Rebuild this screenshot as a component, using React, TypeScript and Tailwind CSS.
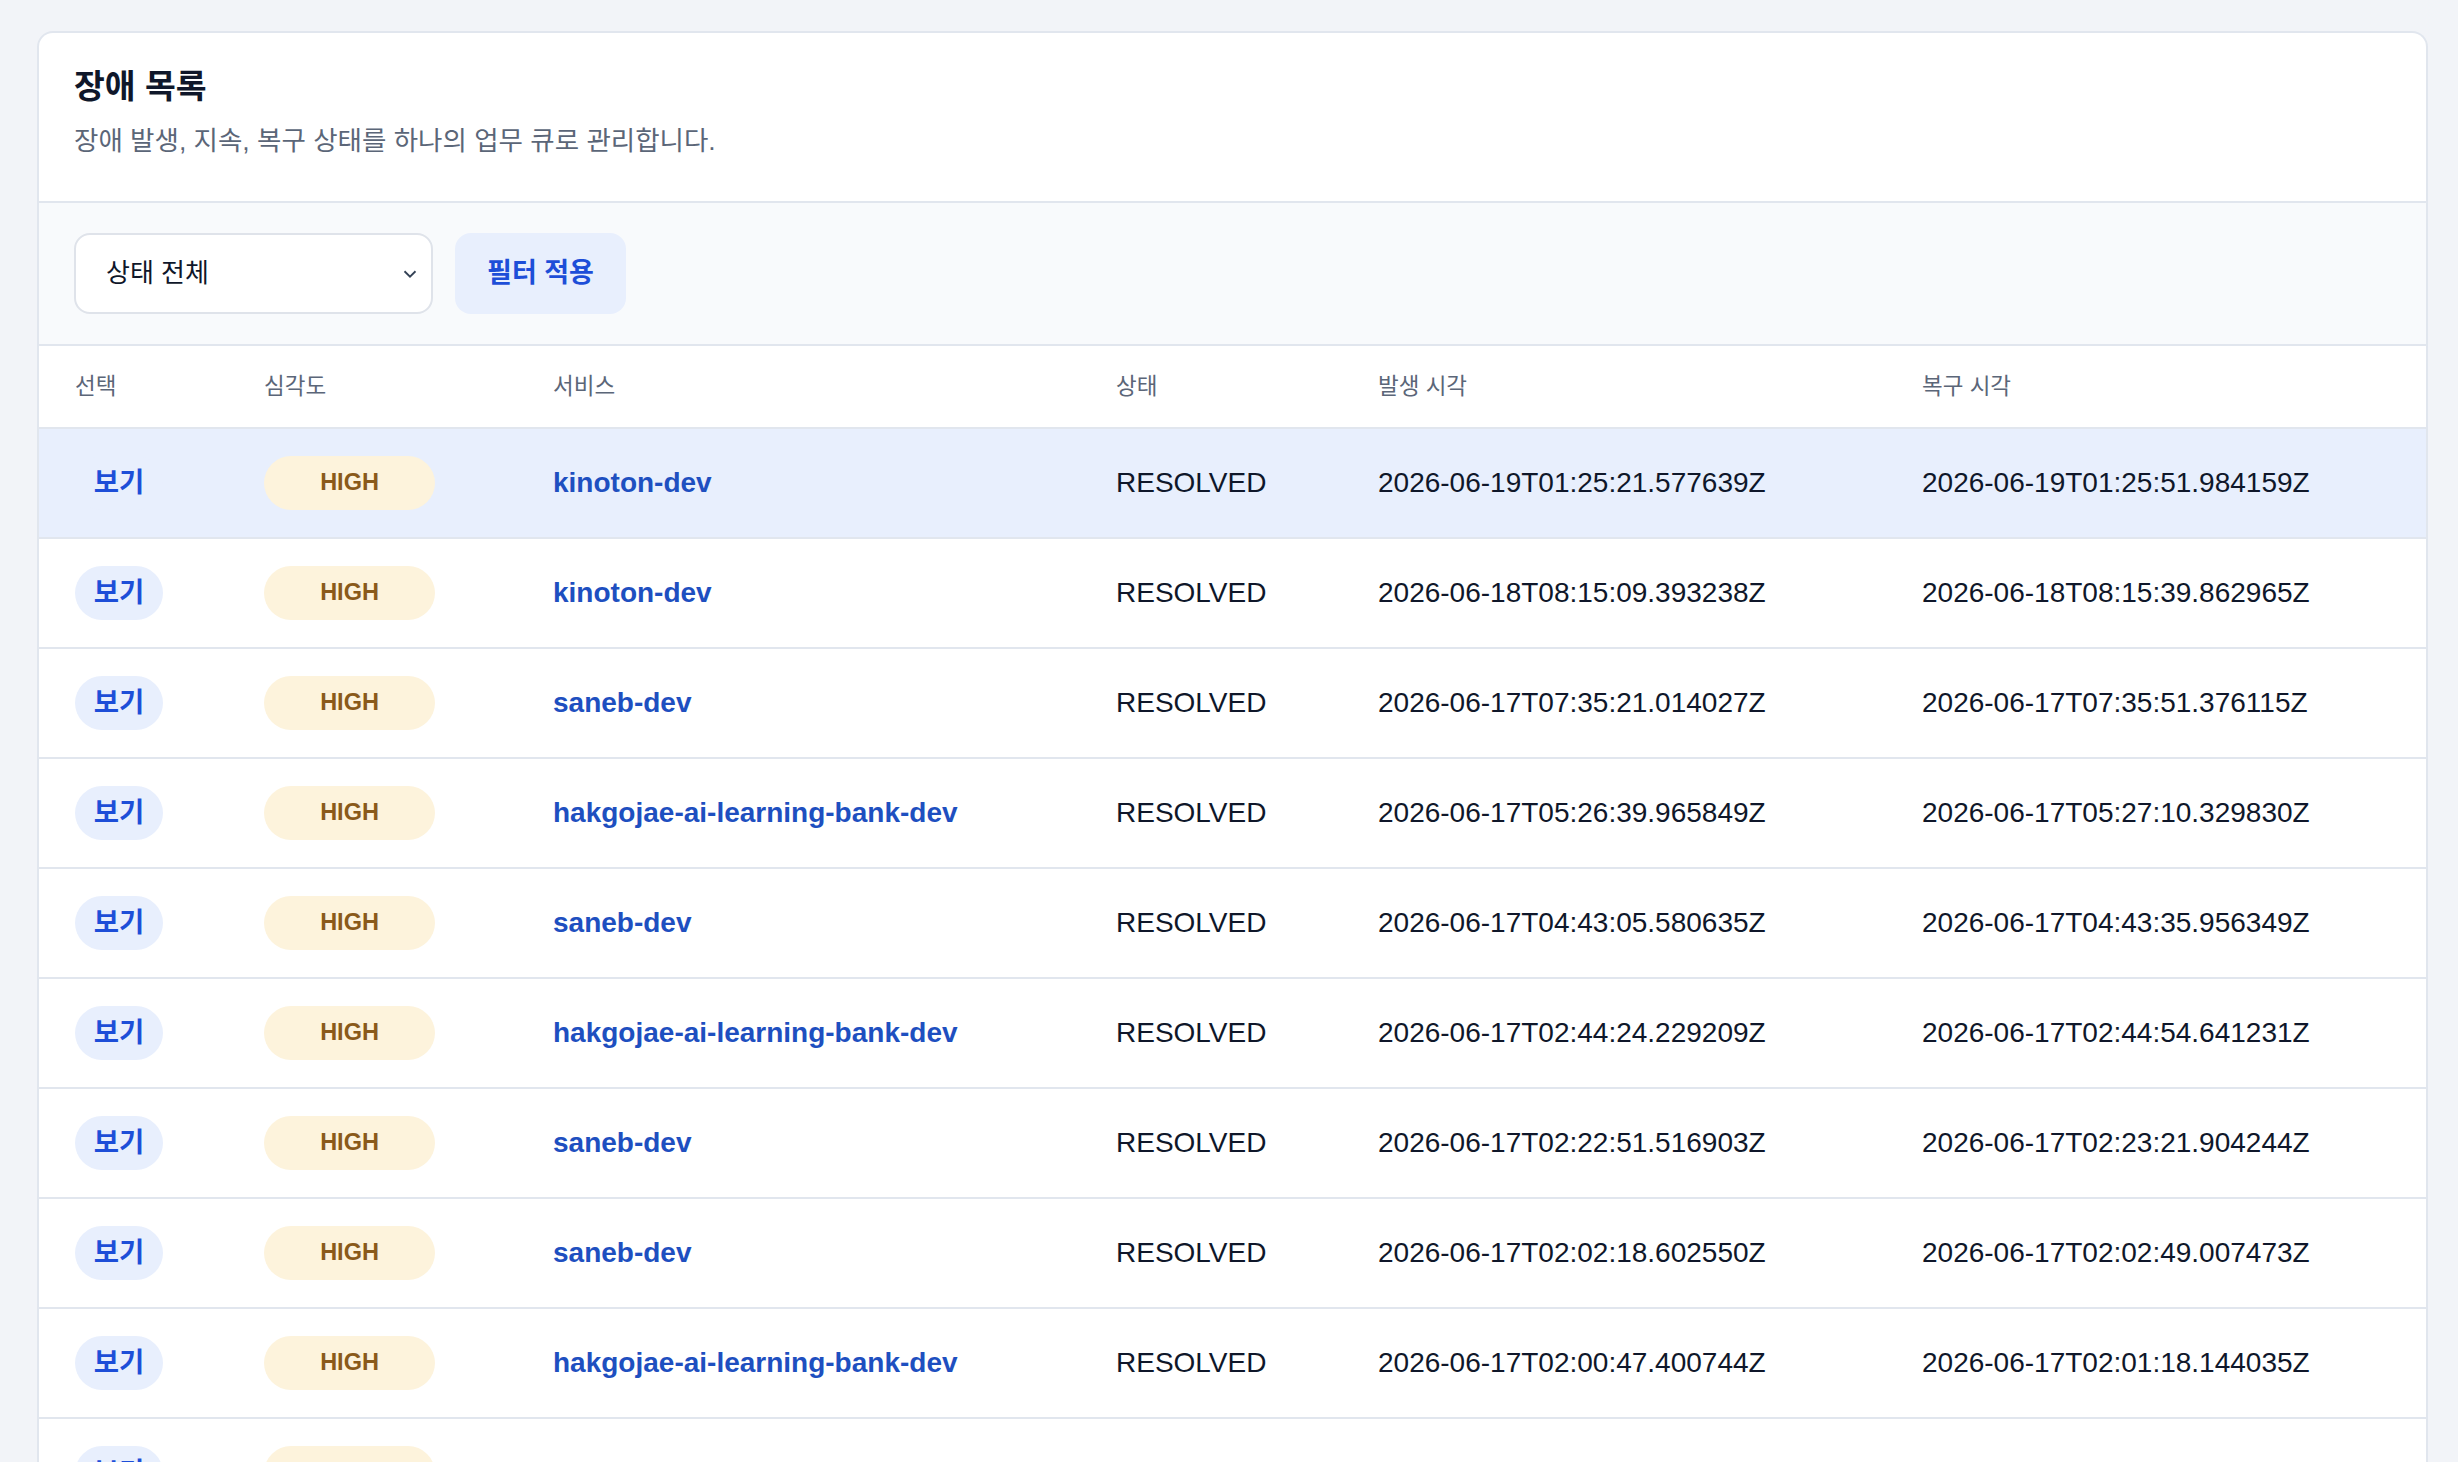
import React from "react";

const rows = [
  ["kinoton-dev", "2026-06-19T01:25:21.577639Z", "2026-06-19T01:25:51.984159Z"],
  ["kinoton-dev", "2026-06-18T08:15:09.393238Z", "2026-06-18T08:15:39.862965Z"],
  ["saneb-dev", "2026-06-17T07:35:21.014027Z", "2026-06-17T07:35:51.376115Z"],
  ["hakgojae-ai-learning-bank-dev", "2026-06-17T05:26:39.965849Z", "2026-06-17T05:27:10.329830Z"],
  ["saneb-dev", "2026-06-17T04:43:05.580635Z", "2026-06-17T04:43:35.956349Z"],
  ["hakgojae-ai-learning-bank-dev", "2026-06-17T02:44:24.229209Z", "2026-06-17T02:44:54.641231Z"],
  ["saneb-dev", "2026-06-17T02:22:51.516903Z", "2026-06-17T02:23:21.904244Z"],
  ["saneb-dev", "2026-06-17T02:02:18.602550Z", "2026-06-17T02:02:49.007473Z"],
  ["hakgojae-ai-learning-bank-dev", "2026-06-17T02:00:47.400744Z", "2026-06-17T02:01:18.144035Z"],
  ["hakgojae-ai-learning-bank-dev", "2026-06-16T23:41:12.553108Z", "2026-06-16T23:41:42.901277Z"],
];

const grid = "grid grid-cols-[189px_289px_563px_262px_544px_1fr] items-center pl-[36px]";

export default function App() {
  return (
    <div
      className="h-[1462px] overflow-hidden bg-[#f2f4f8] pt-[31px] pl-[37px] pr-[30px]"
      style={{ fontFamily: '"Liberation Sans", "Noto Sans CJK KR", sans-serif' }}
    >
      <div className="rounded-t-[16px] border-2 border-b-0 border-[#e1e6ee] bg-white">
        <div className="px-[35px] pt-[30px] h-[170px] border-b-2 border-[#e1e6ee]">
          <h1 className="text-[33.5px] font-bold text-[#0f172a] leading-[48px]">장애 목록</h1>
          <p className="mt-[12px] text-[26.5px] text-[#5b6678] leading-[36px]">장애 발생, 지속, 복구 상태를 하나의 업무 큐로 관리합니다.</p>
        </div>
        <div className="flex items-center gap-[22px] bg-[#f8fafc] px-[35px] h-[143px] border-b-2 border-[#e1e6ee]">
          <div className="flex w-[359px] h-[81px] items-center justify-between rounded-[16px] border-2 border-[#dfe3ea] bg-white pl-[30px] pr-[10px] text-[26px] text-[#0f172a]">
            <span>상태 전체</span>
            <svg width="22" height="22" viewBox="0 0 24 24" fill="none" stroke="#334155" strokeWidth="2"><path d="M6 9l6 6 6-6" /></svg>
          </div>
          <div className="flex w-[171px] h-[81px] items-center justify-center rounded-[16px] bg-[#e8effd] text-[27px] font-bold text-[#1d4ed8]">필터 적용</div>
        </div>
        <div className={`${grid} h-[83px] border-b-2 border-[#e1e6ee] text-[22.5px] text-[#5b6678]`}>
          <div>선택</div><div>심각도</div><div>서비스</div><div>상태</div><div>발생 시각</div><div>복구 시각</div>
        </div>
        {rows.map((r, i) => (
          <div key={i} className={`${grid} h-[110px] border-b-2 border-[#e1e6ee] ${i === 0 ? "bg-[#e8effd]" : ""}`}>
            <div>
              <span className="inline-flex w-[88px] h-[54px] items-center justify-center rounded-full bg-[#e8effd] text-[27.5px] font-bold text-[#1d4ed8]">보기</span>
            </div>
            <div>
              <span className="inline-flex w-[171px] h-[54px] items-center justify-center rounded-full bg-[#fdf3dc] text-[23.5px] font-bold text-[#8a5a1a]">HIGH</span>
            </div>
            <div className="text-[28px] font-bold text-[#1e4fc0]">{r[0]}</div>
            <div className="text-[28px] text-[#0f172a]">RESOLVED</div>
            <div className="text-[28px] text-[#0f172a]">{r[1]}</div>
            <div className="text-[28px] text-[#0f172a]">{r[2]}</div>
          </div>
        ))}
      </div>
    </div>
  );
}
